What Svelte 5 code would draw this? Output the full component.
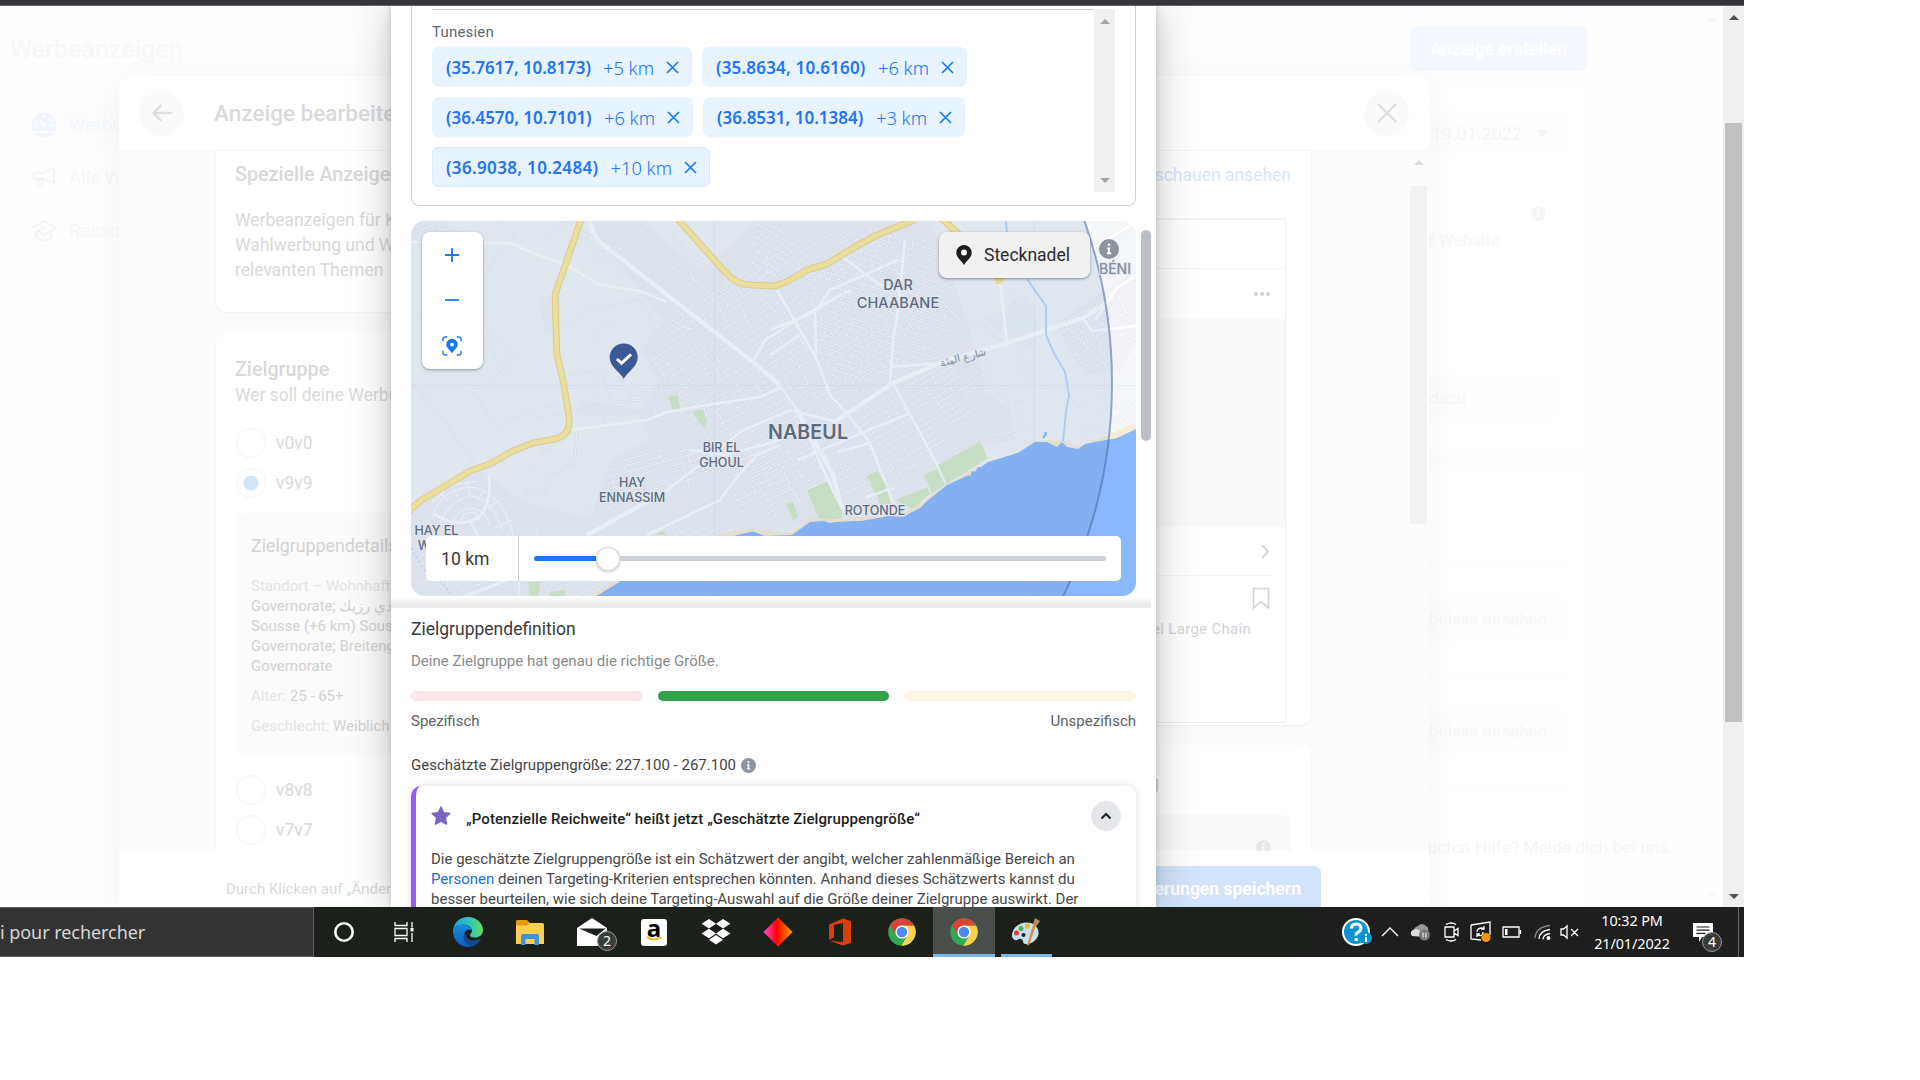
<script>
  const chips = [
    { at: '(35.7617, 10.8173)', km: '+5 km', w: 260, ls: -0.08 },
    { at: '(35.8634, 10.6160)', km: '+6 km', w: 265, ls: 0.18 },
    { at: '(36.4570, 10.7101)', km: '+6 km', w: 261, ls: -0.04 },
    { at: '(36.8531, 10.1384)', km: '+3 km', w: 262, ls: 0 },
    { at: '(36.9038, 10.2484)', km: '+10 km', w: 278, ls: 0.34, focus: true }
  ];

  // Built-up areas: outline, street direction in degrees, block size
  const areas = [
    { id: 'a1', pts: '648,362 672,318 715,288 775,250 850,225 900,235 935,300 880,378 830,418 780,388 735,400 672,402', deg: -32, u: 9, v: 6 },
    { id: 'a2', pts: '808,272 900,230 935,238 962,300 942,358 890,380 822,385', deg: 18, u: 11, v: 6 },
    { id: 'a3', pts: '668,402 780,392 838,425 893,503 855,517 800,510 735,470 690,440', deg: -27, u: 11, v: 7 },
    { id: 'a4', pts: '855,417 945,362 978,385 976,410 940,448 905,480 880,480', deg: -30, u: 10, v: 6 },
    { id: 'a5', pts: '604,470 640,450 680,443 722,465 690,486 640,505 602,490', deg: -15, u: 9, v: 6 },
    { id: 'a6', pts: '520,596 590,560 700,520 780,530 760,560 650,580 600,596', deg: -28, u: 12, v: 7 },
    { id: 'a7', pts: '1052,325 1085,305 1136,290 1136,350 1100,375 1070,365', deg: -24, u: 12, v: 9 },
    { id: 'a8', pts: '1076,430 1112,402 1136,398 1136,420 1085,443', deg: -22, u: 9, v: 6 },
    { id: 'a9', pts: '590,255 620,245 635,280 610,275', deg: 28, u: 9, v: 7 },
    { id: 'b1', pts: '420,535 520,530 524,596 415,596', deg: -22, u: 13, v: 8 },
    { id: 'b2', pts: '755,222 780,222 800,250 770,285 750,262', deg: 30, u: 8, v: 6 },
    { id: 'b3', pts: '720,480 780,450 800,500 770,520 735,510', deg: -24, u: 9, v: 6 },
    { id: 'b4', pts: '411,221 450,221 440,235 411,240', deg: -24, u: 12, v: 8 }
  ];

  let seed = 7;
  function rnd() {
    seed = (seed * 16807) % 2147483647;
    return seed / 2147483647;
  }

  function streets(area) {
    const p = area.pts.split(' ').map((s) => s.split(',').map(Number));
    const cx = p.reduce((t, q) => t + q[0], 0) / p.length;
    const cy = p.reduce((t, q) => t + q[1], 0) / p.length;
    const a = (area.deg * Math.PI) / 180;
    const at = (x, y) =>
      (cx + x * Math.cos(a) - y * Math.sin(a)).toFixed(1) + ' ' + (cy + x * Math.sin(a) + y * Math.cos(a)).toFixed(1);
    let d = '';
    for (let y = -170; y < 170; y += area.v) {
      for (let x = -170; x < 170; x += area.u) {
        if (rnd() > 0.16) d += `M${at(x, y)}L${at(x + area.u, y)}`;
        if (rnd() > 0.5) {
          const k = x + rnd() * 3;
          d += `M${at(k, y)}L${at(k, y + area.v)}`;
        }
      }
    }
    return d;
  }
  const grids = areas.map((area) => ({ ...area, d: streets(area) }));

  const highway =
    'M582 217 568 257 555 295 Q556 330 557 355 L563 380 569 417Q571 435 555 439L533 443 513 451 490 464 470 471 420 501 409 511M676 217 725 272Q737 285 750 285L775 286 790 280 807 270 827 264 853 248 877 235 915 220M940 217 962 237';
  const lanes =
    'M411 318L424 322 484 318 490 330 518 355 505 372 472 391 497 426 535 408 562 404M411 383L436 410 474 462M484 274L498 256 512 243 516 232 500 222M545 240L570 221M573 245L600 225M515 352L500 370 484 322M520 435L530 470 545 455 538 436M533 420L565 412 600 400M540 455L577 430 575 462 548 477 545 495 525 490M557 330L590 310 640 300 652 322 700 330M592 350L598 325 625 318M595 250L575 221M635 222L662 262 700 284M670 232L690 255 720 270 740 300M700 250L690 275 715 300 760 270M628 360L590 380 600 400 608 440M620 380L632 395 647 392M648 362L662 385 655 410 690 450 700 470M570 375L600 370 612 400M612 402L644 400M582 505L600 515 622 500M600 530L585 515M540 300L556 330M668 318L690 330 705 320M940 300L960 320 990 330 1003 345M940 330L975 370 1005 390 1026 430 990 435 940 455M985 358L1000 400 1012 405M1000 320L1015 310 1018 295 1003 290M1015 345L1030 372M1012 360L1040 390M985 280L975 260M1027 425L1045 415 1050 410M1071 395L1080 410 1110 385M1005 408L1026 398M1095 240L1115 270 1110 290M1105 250L1136 228M1060 320L1090 350 1110 370M1075 315L1085 345M493 480L522 520 535 575M420 510L440 545 450 596M525 490L545 560';
  const secondary =
    'M411 242 510 243 533 253 567 265 600 285 640 291 667 302M570 430 647 420 667 412 707 405 760 397 780 388M587 535 663 493 700 465 740 432 790 410 833 421M647 535 720 500 737 477 757 455 780 445M690 450 725 455 770 443 800 430M770 355 800 335M753 362 765 340 800 318 850 290M777 290 817 360 830 395 850 417 870 443 893 503M770 377 783 390 797 410 810 440 843 513M893 383 947 483M890 383 893 340 898 310 905 240M890 367 940 363M1000 282 1007 343M815 312 816 355M770 330 815 312 830 290 898 260M797 460 910 413M838 452 870 443M1083 318 1092 331 1136 326M1107 303 1117 288 1136 275M1090 250 1136 222M865 497 895 488M1117 288 1095 320M840 255 880 285 898 290M433 513Q455 530 478 518 492 505 489 475M470 520 500 580M465 596 520 575';
</script>

{#snippet info(r)}
  <svg class="info" width={r * 2} height={r * 2} viewBox="0 0 20 20">
    <circle cx="10" cy="10" r="10" fill="currentColor" />
    <path d="M8 8.400h3v5.200h1.400v1.600H7.800v-1.600h1.100V10H8zM8.700 4.400h2.400v2.300H8.700z" fill="#fff" />
  </svg>
{/snippet}

{#snippet chrome()}
  <svg width="28" height="28" viewBox="0 0 28 28">
    <circle cx="14" cy="14" r="13.800" fill="#2da94f" />
    <path d="M14 7.500h12A13.800 13.800 0 0 1 13.300 27.800L19.800 17z" fill="#fdd04b" />
    <path d="M2 7.200 8.200 17 14 7.600h12A13.800 13.800 0 0 0 2 7.200z" fill="#d84437" />
    <circle cx="14" cy="14" r="6.600" fill="#fff" />
    <circle cx="14" cy="14" r="5.200" fill="#4b8bf5" />
  </svg>
{/snippet}

<div class="screen">
  <div class="topline"></div>

  <div class="browser">
    <main class="page">
      <div class="left">
        <h1>Werbeanzeigen</h1>
        <nav>
          <div class="item on">
            <svg width="26" height="26" viewBox="0 0 26 26">
              <path d="M2 19A12.500 12.500 0 1 1 24 19zM3.500 21h19A12.500 12.500 0 0 1 3.500 21z" fill="#f1f6fe" />
              <path d="M9 9l5 5" stroke="#fff" stroke-width="2.500" /><g fill="#fff"><circle cx="13" cy="4.500" r="1.300" /><circle cx="19" cy="7" r="1.300" /><circle cx="21.500" cy="13" r="1.300" /><circle cx="4.500" cy="13" r="1.300" /></g>
            </svg>
            <span>Werbeanz.</span>
          </div>
          <div class="item">
            <svg width="26" height="24" viewBox="0 0 26 24" fill="none" stroke="#f4f4f4" stroke-width="1.800">
              <path d="M4 7h8l11-5v15l-11-4H4a2 2 0 0 1-2-2V9a2 2 0 0 1 2-2zM7 13v6a2 2 0 0 0 4 0v-6" />
            </svg>
            <span>Alle Werb.</span>
          </div>
          <div class="item">
            <svg width="26" height="24" viewBox="0 0 26 24" fill="none" stroke="#f4f4f4" stroke-width="1.800">
              <path d="M1 9 13 2l12 7-12 7-6-4 7-4M6 14v5l7 3 7-3v-6M6 12l-4 10" />
            </svg>
            <span>Ressourcen</span>
          </div>
        </nav>
      </div>

      <div class="right">
        <div class="create">Anzeige erstellen</div>
        <section class="rcard first">
          <div class="date">19.01.2022<i></i></div>
          <div class="rinfo">{@render info(7.5)}</div>
          <b>auf Website</b>
          <div class="pill dazu">dazu</div>
        </section>
        <section class="rcard second">
          <hr />
          <div class="pill">Ergebnisse ansehen</div>
          <hr />
          <div class="pill">Ergebnisse ansehen</div>
          <hr />
        </section>
        <div class="help">Du brauchst Hilfe? Melde dich bei uns.</div>
      </div>
      <div class="ghostbar"><i class="up"></i><i class="down"></i></div>
    </main>

    <div class="bar"><i class="up"></i><div class="thumb"></div><i class="down"></i></div>

    <div class="dialog edit">
      <header>
        <div class="round">
          <svg width="20" height="18" viewBox="0 0 20 18" fill="none" stroke="#dfe0e1" stroke-width="2.600" stroke-linecap="round" stroke-linejoin="round"><path d="M18.500 9H1.500M8.500 1.800 1.500 9l7 7.200" /></svg>
        </div>
        <h2>Anzeige bearbeiten</h2>
        <div class="round">
          <svg width="20" height="20" viewBox="0 0 20 20" stroke="#dcdee0" stroke-width="2.400" stroke-linecap="round"><path d="M1.500 1.500l17 17M18.500 1.500l-17 17" /></svg>
        </div>
      </header>

      <div class="content">
        <div class="col">
          <section class="ecard special">
            <h3>Spezielle Anzeigen</h3>
            <p>Werbeanzeigen für Kredite<br />Wahlwerbung und Werbung<br />relevanten Themen</p>
          </section>
          <section class="ecard target">
            <h3>Zielgruppe</h3>
            <p class="sub">Wer soll deine Werbung</p>
            <div class="radio"><i></i>v0v0</div>
            <div class="radio"><i class="sel"></i>v9v9</div>
            <div class="details">
              <h4>Zielgruppendetails</h4>
              <p><em>Standort – Wohnhaft in</em><br />Governorate; المهدي رزيك<br />Sousse (+6 km) Sousse<br />Governorate; Breitengrad<br />Governorate</p>
              <p><em>Alter:</em> 25 - 65+</p>
              <p><em>Geschlecht:</em> Weiblich</p>
            </div>
            <div class="radio"><i></i>v8v8</div>
            <div class="radio"><i></i>v7v7</div>
          </section>
        </div>

        <div class="col preview">
          <section class="ecard pcard">
            <div class="link">Vorschauen ansehen</div>
            <div class="frame">
              <div class="fhead"></div>
              <div class="dots"><i></i><i></i><i></i></div>
              <div class="media"></div>
              <div class="cta">
                <svg width="9" height="15" viewBox="0 0 9 15" fill="none" stroke="#cfcfcf" stroke-width="1.800"><path d="M1 1l6 6.500L1 14" /></svg>
              </div>
              <div class="save">
                <svg width="18" height="23" viewBox="0 0 18 23" fill="none" stroke="#d6d6d6" stroke-width="1.700"><path d="M1.500 1.500h15v19.500L9 14.500 1.500 21z" /></svg>
              </div>
              <div class="chain">Steel Large Chain</div>
            </div>
          </section>
          <section class="ecard pcard2">
            <div class="spend">Zahlung</div>
            <div class="ask">{@render info(7.5)}</div>
          </section>
        </div>
        <div class="ebar"><i class="up"></i><div class="thumb"></div></div>
      </div>

      <footer>
        <span>Durch Klicken auf „Änderungen</span>
        <div class="btn">Änderungen speichern</div>
      </footer>
    </div>

    <div class="dialog audience">
      <div class="scroller">
        <div class="places">
          <div class="list">
            <div class="country">Tunesien</div>
            <div class="chips">
              {#each chips as c}
                <div class="chip" class:focus={c.focus} style="width: {c.w}px">
                  <b style="letter-spacing: {c.ls}px">{c.at}</b><span>{c.km}</span>
                  <svg width="13" height="13" viewBox="0 0 13 13" stroke="#1b7bf0" stroke-width="1.700"><path d="M1 1l11 11M12 1 1 12" /></svg>
                </div>
              {/each}
            </div>
          </div>
          <div class="lbar"><i class="up"></i><i class="down"></i></div>
        </div>

        <div class="map">
          <svg class="ground" width="725" height="375" viewBox="411 221 725 375">
            <defs>
              {#each grids as g}
                <clipPath id={g.id}><polygon points={g.pts} /></clipPath>
              {/each}
            </defs>
            <rect x="411" y="221" width="725" height="375" fill="#f4f6f8" />
            <g fill="#f1f1f6">
              <path d="M590 221 640 221 700 270 760 221 930 221 960 300 985 380 978 410 1000 430 940 470 900 510 800 525 730 540 590 596 411 596 411 505 480 470 520 500 590 520 610 460 650 440 640 415 575 415 580 400 640 410 660 380 640 350 665 320 640 290 600 240z" />
              <path d="M1055 325 1090 300 1136 270 1136 340 1120 370 1085 375z" />
              <path d="M925 390 960 372 1010 410 1015 440 960 450z" />
              <path d="M540 300 560 290 560 335 545 335zM411 225 440 221 460 232 430 243 411 245z" />
            </g>
            <g fill="#eff4f6">
              <path d="M800 270 815 300 835 290 820 270zM845 330l18 18 12-18zM790 330l15 25 15-10zM985 320l40-25 20 40-20 15z" />
            </g>
            <g fill="none" stroke="#fff" stroke-width="1.100">
              {#each grids as g}
                <g clip-path="url(#{g.id})"><path class="halo" d={g.d} /><path d={g.d} /></g>
              {/each}
              <path class="halo" d={lanes} /><path d={lanes} />
            </g>
            <g fill="none" stroke="#fff" stroke-width="1.200">
              <path d="M433 517Q440 490 470 487 500 490 512 530L520 596M440 523Q452 498 472 496 494 500 502 530M450 527Q458 508 472 508 485 510 490 525M460 524l4-10 10-2 5 8M430 505l20-20 28-4M440 492l8 9M452 486l6 12M466 482l4 14M484 490l-6 10M500 500l-12 8M512 520l-18 8" />
            </g>
            <g fill="none" stroke="#fff" stroke-linejoin="round">
              <path d={secondary} stroke-width="2.600" />
              <path d="M590 221Q591 232 600 242L633 268 680 305 753 362 780 385M833 423 893 383 940 363 983 350 1007 343 1047 330 1083 318 1107 303M797 410 833 475 843 513M587 535 663 493" stroke-width="4.500" />
            </g>
            <g fill="#d8ecc8">
              <path d="M668 397 678 395 680 408 673 410zM693 412 703 409 707 422 705 429 698 421zM807 490 827 482 843 513 842 518 820 522zM867 476 878 471 887 488 875 493zM877 495 887 491 892 505 880 504zM938 465 980 442 988 458 947 484zM924 475 937 469 945 485 932 494zM896 500 927 487 930 494 912 509zM786 504 793 502 798 517 793 520zM528 582h12l-2 14h-8zM550 592l15-2v6h-17zM655 535l8-4 4 4z" />
            </g>
            <path d="M585 598 618 580 660 558 720 534 750 529 792 533 810 518 837 520 857 517 903 514 925 500 970 471 1018 452 1035 441 1062 440 1078 447 1110 434 1136 422 1136 596z" fill="#f7edd6" />
            <path d="M595 597 621 581 670 560 700 548 737 535 753 531.500 765 536 792 535 810 522 824 521 829 523 837 522 855 521 861 521 889 516 903 517 920 508 926 502 947 485 969 475 970 477 972 471 975 472 978 467 981 467 988 462 1018 453 1035 442 1047 442 1057 447 1062 442 1067 447 1078 449 1085 444 1117 438 1136 429 1136 597z" fill="#8ab8fc" />
            <path d="M1006 221 1007 235M1027 279 1046 306 1046 335 1054 353 1065 372 1069 395 1066 412 1063 441" fill="none" stroke="#bdd8fb" stroke-width="1.800" />
            <path d="M1043 438l3-4-1-2" fill="none" stroke="#8ab8fc" stroke-width="2.200" />
            <path d="M411 548 424 570 440 580 452 596" fill="none" stroke="#9fc8ff" stroke-dasharray="2 3" />
            <g fill="none" stroke-linejoin="round">
              <path d={highway} stroke="#f5d070" stroke-width="6.600" />
              <path d={highway} stroke="#fdef9e" stroke-width="5" />
            </g>
            <path d="M993 278h12l-4 6h-4z" fill="#f9e78f" />
            <circle cx="622" cy="383" r="490" fill="#527bab" fill-opacity=".13" stroke="#47669f" stroke-opacity=".55" stroke-width="2" />
            <path d="M714.500 221v375M1034.500 221v375M411 385.500h725" stroke="#8a9bb5" stroke-opacity=".09" />
            <g class="labels" text-anchor="middle">
              <text x="898" y="290" font-size="14.500">DAR</text>
              <text x="898" y="308" font-size="14.500" letter-spacing=".1">CHAABANE</text>
              <text x="808" y="439" font-size="19.500" class="big" letter-spacing=".2">NABEUL</text>
              <text x="721.500" y="452" font-size="12.500">BIR EL</text>
              <text x="721.500" y="467" font-size="12.500">GHOUL</text>
              <text x="632" y="487" font-size="12.500">HAY</text>
              <text x="632" y="502" font-size="12.500">ENNASSIM</text>
              <text x="436.500" y="535" font-size="12.500">HAY EL</text>
              <text x="424" y="550" font-size="12.500">W</text>
              <text x="875" y="515" font-size="12.500">ROTONDE</text>
              <text x="1115" y="274" font-size="14" class="grey">BÉNI</text>
              <text x="963" y="361" font-size="10.500" class="grey" transform="rotate(-14 963 357)">شارع البيئة</text>
            </g>
            <path d="M623.700 379C620 371.500 609.700 367 609.700 357.500a14 14 0 0 1 28 0c0 9.500-10.300 14-14 21.500z" fill="#3b5998" />
            <path d="M617 359l4.500 4.300 9.500-9" fill="none" stroke="#fff" stroke-width="3" />
          </svg>

          <div class="zoom">
            <svg width="14" height="14" viewBox="0 0 14 14" stroke="#1877f2" stroke-width="1.800"><path d="M7 0v14M0 7h14" /></svg>
            <svg width="14" height="14" viewBox="0 0 14 14" stroke="#1877f2" stroke-width="1.800"><path d="M0 8h14" /></svg>
            <svg width="20" height="20" viewBox="0 0 21 21">
              <path d="M1 5.500V3.500A2.500 2.500 0 0 1 3.500 1h2M15.500 1h2A2.500 2.500 0 0 1 20 3.500v2M20 15.500v2a2.500 2.500 0 0 1-2.500 2.500h-2M5.500 20h-2A2.500 2.500 0 0 1 1 17.500v-2" fill="none" stroke="#1877f2" stroke-width="1.500" />
              <path fill-rule="evenodd" d="M10.500 18C8 14.500 4.500 12.500 4.500 9a6 6 0 0 1 12 0c0 3.500-3.500 5.500-6 9zM10.500 11a2 2 0 1 0 0-4 2 2 0 0 0 0 4z" fill="#1877f2" />
            </svg>
          </div>
          <div class="droppin">
            <svg width="16" height="20" viewBox="0 0 16 20"><path fill-rule="evenodd" d="M8 20C6 16 .3 13 .3 7.700a7.700 7.700 0 0 1 15.400 0C15.700 13 10 16 8 20zM8 10.500a3 3 0 1 0 0-6 3 3 0 0 0 0 6z" fill="#1c1e21" /></svg>
            Stecknadel
          </div>
          <div class="mapinfo">{@render info(10)}</div>
          <div class="radius">
            <div class="km">10 km</div>
            <div class="track"><div class="fill"></div><div class="knob"></div><div class="rest"></div></div>
          </div>
        </div>
      </div>

      <div class="vthumb"></div>
      <div class="shade"></div>

      <div class="def">
        <h5>Zielgruppendefinition</h5>
        <p class="ok">Deine Zielgruppe hat genau die richtige Größe.</p>
        <div class="gauge"><i></i><i></i><i></i></div>
        <div class="ends"><span>Spezifisch</span><span>Unspezifisch</span></div>
        <div class="size">Geschätzte Zielgruppengröße: 227.100 - 267.100 <span>{@render info(7.5)}</span></div>
        <article>
          <div class="ahead">
            <svg width="20" height="20" viewBox="0 0 20 20"><path d="M10 1l2.600 5.800 6.200.7-4.600 4.200 1.300 6.400L10 15.200l-5.500 2.900 1.300-6.400L1.200 7.500l6.200-.7z" fill="#7b64bf" stroke="#7b64bf" stroke-width="1.500" stroke-linejoin="round" /></svg>
            <b>„Potenzielle Reichweite“ heißt jetzt „Geschätzte Zielgruppengröße“</b>
            <div class="fold"><svg width="12" height="8" viewBox="0 0 12 8" fill="none" stroke="#1c1e21" stroke-width="2"><path d="M1.500 6.500 6 2l4.500 4.500" /></svg></div>
          </div>
          <p>Die geschätzte Zielgruppengröße ist ein Schätzwert der angibt, welcher zahlenmäßige Bereich an<br /><a href="#personen">Personen</a> deinen Targeting-Kriterien entsprechen könnten. Anhand dieses Schätzwerts kannst du<br />besser beurteilen, wie sich deine Targeting-Auswahl auf die Größe deiner Zielgruppe auswirkt. Der</p>
        </article>
      </div>
    </div>
  </div>

  <div class="taskbar">
    <div class="search">i pour rechercher</div>
    <div class="apps">
      <div class="app"><svg width="22" height="22" viewBox="0 0 22 22"><circle cx="11" cy="11" r="8.700" fill="none" stroke="#fff" stroke-width="2.600" /></svg></div>
      <div class="app">
        <svg width="22" height="20" viewBox="0 0 22 20" fill="none" stroke="#fff" stroke-width="1.300"><path d="M2 0v3.500h12V0M2 20v-3.500h12V20M2 6.500h12v7H2zM19 0v5.500M19 11v9" /><path d="M17.500 6h3v3.500h-3z" fill="#fff" stroke="none" /></svg>
      </div>
      <div class="app edge">
        <svg width="32" height="32" viewBox="0 0 32 32">
          <defs>
            <linearGradient id="eg" x1="0" x2="1"><stop offset="0" stop-color="#1fa8e0" /><stop offset=".6" stop-color="#35c6b8" /><stop offset="1" stop-color="#66dc5a" /></linearGradient>
            <linearGradient id="eb" x1="0" x2="0" y2="1"><stop offset="0" stop-color="#1b8fdc" /><stop offset="1" stop-color="#0d5ab5" /></linearGradient>
          </defs>
          <path d="M1 15C2 6 8 1 16 1s15 6 15 13c0 5-4 7.500-8 7.500s-5-1.500-5-2.500 2-1.500 2-4.500-4-6-9-6S1 13 1 15z" fill="url(#eg)" />
          <path d="M1 14c1-4 5-6 10-5.500 5 .5 8.500 3 9 6-3-2-6-1-7 2-1 6 5 12 16 6-3 6-8 8.500-13 8.500-9 0-15.500-8-15-17z" fill="url(#eb)" />
          <path d="M13 16c-3 4-2 11 6 14.500 4-.5 8-3.500 10-8-8 5-16 1-16-6.500z" fill="#114a8b" />
        </svg>
      </div>
      <div class="app">
        <svg width="28" height="25" viewBox="0 0 28 25">
          <path d="M0 1.500A1.500 1.500 0 0 1 1.500 0H11l3 3v8H0z" fill="#e39b0b" /><path d="M0 5.500h11L14 3h12.500A1.500 1.500 0 0 1 28 4.500V24H0z" fill="#fbcf55" />
          <path d="M5 25V16a2 2 0 0 1 2-2h14a2 2 0 0 1 2 2v9h-4.500v-6h-9v6z" fill="#3d95e0" />
        </svg>
      </div>
      <div class="app">
        <svg width="32" height="30" viewBox="0 0 32 30"><path d="M1 11 16 1l15 10v18H1z" fill="#fff" /><path d="M3 11.500h26.500l-9 7.500z" fill="#1d211d" /></svg>
        <span class="badge">2</span>
      </div>
      <div class="app"><div class="amazon">a<svg width="18" height="6" viewBox="0 0 18 6"><path d="M2 1q7 5 14 0" fill="none" stroke="#fbb929" stroke-width="2.200" /></svg></div></div>
      <div class="app"><svg width="30" height="26" viewBox="0 0 30 26" fill="#fff"><path d="M8 0l7 4.700-7 4.800-7.500-4.800zM22 0l7.500 4.700L22 9.500l-7-4.800zM8 9.700l7 4.800-7 4.700-7.500-4.700zM22 9.700l7.500 4.800-7.500 4.700-7-4.700zM15 16l7 4.800-7 4.700-7-4.700z" /></svg></div>
      <div class="app">
        <svg width="30" height="30" viewBox="0 0 30 30"><defs><linearGradient id="dg" x1="0" x2="1"><stop offset="0" stop-color="#ff4fd8" /><stop offset=".45" stop-color="#f00" /><stop offset="1" stop-color="#ffa800" /></linearGradient></defs><path d="M15 .5 29.500 15 15 29.500.5 15z" fill="url(#dg)" /></svg>
      </div>
      <div class="app"><svg width="24" height="28" viewBox="0 0 24 28"><path d="M1 6.500 15 .5l8 2.500v22l-8 2.500-14-5 14 1.500V5L6 7v12.500l-5 2.500z" fill="#dc3e0a" /></svg></div>
      <div class="app">{@render chrome()}</div>
      <div class="app active">{@render chrome()}</div>
      <div class="app open">
        <svg width="30" height="28" viewBox="0 0 30 28">
          <path d="M2 13C5 6 13 3 20 5c6 2 9 8 7 13s-8 9-13 8c-3-1-1-4-4-5s-3 2-6 1-4-5-2-9z" fill="#c4e2f3" />
          <circle cx="5.500" cy="15" r="2.500" fill="#e03c31" /><circle cx="10" cy="10.500" r="2.500" fill="#4caf50" /><circle cx="16.500" cy="8" r="2.700" fill="#f5b82e" /><circle cx="12.500" cy="17" r="2" fill="#1d211d" />
          <path d="M16 27 22.500 6l2.500 1-7 20.500z" fill="#e8862e" /><path d="M22 6 24 0l5 3-3.500 5z" fill="#b98a5e" />
        </svg>
      </div>
    </div>
    <div class="tray">
      <svg class="q" width="32" height="28" viewBox="0 0 32 28"><circle cx="14" cy="14" r="13" fill="#0a93d2" stroke="#fff" stroke-width="2" /><path d="M9.500 10.500q0-4.500 4.700-4.500t4.700 4q0 2.500-2.500 4t-2.200 3.500M14.200 20v3" fill="none" stroke="#fff" stroke-width="3.200" /><circle cx="24" cy="20" r="6" fill="#0a93d2" /><path d="M24 16v1.800M24 19v5" stroke="#fff" stroke-width="2" /></svg>
      <svg class="more" width="18" height="10" viewBox="0 0 18 10" fill="none" stroke="#fff" stroke-width="1.400"><path d="M1 9l8-8 8 8" /></svg>
      <svg class="cloud" width="21" height="18" viewBox="0 0 21 18"><path d="M3 9q1-5 5-6 4-4 8 0 3 1 2 6z" fill="#999" /><path d="M2 13q-3-4 1-6 5-3 8 2l4 5z" fill="#ddd" /><circle cx="14.500" cy="12" r="5.500" fill="#777" /><path d="M13 9.500v5M16 9.500v5" stroke="#fff" /></svg>
      <svg class="cam" width="16" height="20" viewBox="0 0 16 20" fill="none" stroke="#fff" stroke-width="1.300"><path d="M1 5h9v10H1zM10 9l4-2.500v7L10 11M2 2.500q5-3 10 0M2 17.500q5 3 10 0" /></svg>
      <svg class="sync" width="22" height="22" viewBox="0 0 22 22" fill="none" stroke="#fff" stroke-width="1.300"><path d="M1 4 20 1v13M1 4v14l10 1M7 11q0-4 5-4l2 1M14 5v3h-3M13 11q0 4-4 3.500l-2-.5M7 16v-3h3" /><circle cx="16" cy="16.500" r="4.500" fill="#ff9500" stroke="none" /></svg>
      <svg class="bat" width="20" height="12" viewBox="0 0 20 12" fill="none" stroke="#fff" stroke-width="1.300"><path d="M1 1h16v10H1zM18.500 4v4" /><path d="M3 3h2.500v6H3z" fill="#fff" stroke="none" /></svg>
      <svg class="wifi" width="17" height="17" viewBox="0 0 17 17" fill="none" stroke-width="1.300"><path d="M1 14Q2 3 16 1.500" stroke="#888" /><path d="M5 15Q5 7 16 5.500M9 15.500q0-5 7-6" stroke="#fff" /><circle cx="14.500" cy="14" r="2" fill="#fff" /></svg>
      <svg class="vol" width="19" height="16" viewBox="0 0 19 16" fill="none" stroke="#fff" stroke-width="1.300"><path d="M1 5h2.500L7 2v12l-3.500-3H1zM11 5l7 7M18 5l-7 7" /></svg>
      <div class="clock"><span>10:32 PM</span><span>21/01/2022</span></div>
      <div class="note"><svg width="20" height="19" viewBox="0 0 20 19"><path d="M0 0h20v14H9l-3 5v-5H0z" fill="#fff" /><path d="M3.500 4h13M3.500 7.200h13M3.500 10.400h9" stroke="#1f1f1f" stroke-width="1.200" /></svg><span class="badge">4</span></div>
      <div class="peek"></div>
    </div>
  </div>
</div>

<style>
  :global(body) { background: #fff; font-family: Roboto, 'Noto Sans', sans-serif; }
  .screen { width: 1744px; height: 957px; display: grid; grid-template-rows: 6px 901px 50px; overflow: hidden; background: #fff; }
  .screen :global(*) { box-sizing: border-box; }
  svg { display: block; flex: none; }
  h1, h2, h3, h4, h5, p { margin: 0; font-weight: 400; }
  .topline { background: #35363a; border-bottom: 1px solid #6b6169; }
  .browser { position: relative; display: flex; overflow: hidden; }
  i.up, i.down { display: block; width: 0; height: 0; border: 5px solid transparent; }
  i.up { border-bottom-color: currentColor; border-top: 0; }
  i.down { border-top-color: currentColor; border-bottom: 0; }

  .page { width: 1723px; display: flex; background: #fefefe; }
  .left { width: 391px; padding: 29px 0 0 10px; }
  h1 { font-size: 25px; font-weight: 500; line-height: 30px; color: #f8f8f8; letter-spacing: .05px; }
  nav { margin-top: 22px; padding: 13px 0 0 8px; display: flex; flex-direction: column; gap: 3px; }
  .item { height: 50px; padding-left: 13px; display: flex; align-items: center; gap: 12px; font-size: 18.750px; color: #f7f7f7; }
  .item.on { color: #f4f8fe; font-weight: 500; background: #fdfdfd; border-radius: 8px; }
  .right { margin-left: 765px; width: 531px; display: flex; flex-direction: column; align-items: flex-end; padding: 20px 0 0; }
  .create { width: 177px; height: 45px; margin-right: 100px; border-radius: 7px; background: #f5f9ff; color: #fff; font-weight: 700; font-size: 17.500px; display: flex; align-items: center; justify-content: center; }
  .rcard { width: 431px; margin-right: 100px; background: #fff; border-radius: 8px; color: #f8f8f8; padding: 20px; display: flex; flex-direction: column; align-items: flex-end; }
  .first { margin-top: 19px; height: 361px; }
  .date { height: 45px; padding-right: 19px; border-radius: 7px; background: #fefefe; font-size: 18px; display: flex; align-items: center; gap: 14px; color: #f6f6f6; padding-top: 2px; }
  .date i { border: 6px solid transparent; border-top: 7px solid #f4f4f4; border-bottom: 0; }
  .rinfo { margin: 51px 21px 0 0; color: #f6f6f6; }
  .rcard b { margin: 8px 67px 0 0; font-size: 17px; font-weight: 500; line-height: 22px; color: #f8f8f8; }
  .pill { height: 45px; width: 200px; padding-right: 20px; border-radius: 7px; background: #fefefe; display: flex; align-items: center; justify-content: flex-end; font-size: 17px; color: #f7f7f7; }
  .pill.dazu { margin: 124px 10px 0 0; padding-right: 91px; }
  .second { margin-top: 19px; height: 437px; padding-top: 91px; }
  hr { width: 100%; border: 0; border-top: 1px solid #fbfbfb; margin: 0 0 33px; }
  .pill + hr { margin-top: 32px; }
  .second .pill { margin-top: 1px; }
  .help { margin: -90px 0 0; width: 330px; height: 60px; border-radius: 10px; font-size: 17.200px; display: flex; align-items: center; justify-content: flex-end; padding-right: 14px; color: #f6f6f6; white-space: nowrap; letter-spacing: .1px; }
  .ghostbar { margin-left: 14px; width: 21px; display: flex; flex-direction: column; align-items: center; justify-content: space-between; padding: 10px 0 9px; color: #f7f7f7; }
  .bar { width: 21px; background: #f0f0f0; display: flex; flex-direction: column; align-items: center; padding: 9px 0 8px; color: #505050; }
  .bar .thumb { width: 17px; height: 599px; margin-top: 103px; background: #c1c1c1; }
  .bar .down { margin-top: auto; }

  .dialog { position: absolute; overflow: hidden; background: #fff; }
  .edit { left: 119px; top: 70px; width: 1310px; height: 840px; border-radius: 12px 12px 0 0; display: flex; flex-direction: column; box-shadow: 0 4px 34px rgba(0, 0, 0, .045); }
  .edit header { height: 75px; padding: 0 20px; display: flex; align-items: center; border-bottom: 1px solid #f6f6f6; }
  .round { width: 45px; height: 45px; border-radius: 50%; background: #fafafa; display: flex; align-items: center; justify-content: center; }
  h2 { flex: 1; margin-left: 30px; font-size: 22.500px; font-weight: 500; color: #dadada; }
  .content { height: 700px; display: flex; background: #fcfcfc; padding-left: 97px; overflow: hidden; }
  .col { width: 540px; flex: none; }
  .ecard { background: #fff; box-shadow: 0 1px 3px rgba(0, 0, 0, .05); }
  .special { height: 161px; padding: 9px 20px; border-radius: 0 0 10px 10px; }
  h3 { margin-left: -1px; font-size: 19.700px; font-weight: 500; line-height: 30px; color: #d9d9d9; }
  .special p { margin: 18px 0 0 -1px; font-size: 17.500px; line-height: 25px; color: #d9d9d9; }
  .target { margin-top: 20px; height: 700px; padding: 23px 20px 21px; border-radius: 10px 10px 0 0; }
  .sub { font-size: 17.500px; line-height: 24px; color: #dadada; margin: -2px 0 0 -1px; }
  .radio { height: 30px; display: flex; align-items: center; gap: 10px; font-size: 17.500px; color: #d9d9d9; margin-bottom: 10px; }
  .sub + .radio { margin-top: 21px; }
  .radio i { width: 30px; height: 30px; border: 1px solid #f4f4f4; border-radius: 50%; }
  .radio i.sel { background: radial-gradient(circle, #d2e4fc 7px, #fff 8px); }
  .details { height: 242px; margin: 15px 0 20px; padding: 20px 15px; border-radius: 8px; background: #fbfbfb; }
  h4 { font-size: 17.800px; line-height: 26px; color: #d2d2d2; }
  .details p { font-size: 15px; line-height: 20px; color: #d2d2d2; margin-top: 10px; }
  .details h4 + p { margin-top: 17px; }
  .details em { font-style: normal; color: #e3e3e3; }
  .preview { margin-left: 14px; width: 541px; }
  .pcard { height: 574px; border-radius: 0 0 10px 10px; padding: 12px 25px 0 20px; display: flex; flex-direction: column; }
  .link { height: 55px; margin-right: -5px; text-align: right; font-size: 17.500px; line-height: 25px; color: #d9e6fc; }
  .frame { height: 505px; border: 1px solid #efefef; border-top: 2px solid #f4f4f4; display: flex; flex-direction: column; }
  .fhead { height: 49px; border-bottom: 1px solid #f3f3f3; }
  .dots { height: 50px; display: flex; gap: 2px; align-items: center; justify-content: flex-end; padding-right: 15px; }
  .dots i { width: 4px; height: 4px; border-radius: 50%; background: #d0d0d0; }
  .media { height: 208px; background: #fafafa; }
  .cta { height: 49px; margin-right: 13px; padding-right: 2px; border-bottom: 1px solid #f5f5f5; display: flex; align-items: center; justify-content: flex-end; }
  .save { height: 44px; padding: 11px 15px 0 0; display: flex; justify-content: flex-end; }
  .chain { padding-right: 34px; text-align: right; font-size: 15px; line-height: 18px; color: #d3d3d3; letter-spacing: .3px; }
  .pcard2 { margin-top: 20px; height: 300px; border-radius: 10px; padding: 27px 20px; }
  .spend { width: 369px; height: 43px; text-align: right; font-size: 17.500px; line-height: 22px; color: #d2d2d2; }
  .ask { height: 80px; border-radius: 8px; background: #fafafa; display: flex; justify-content: flex-end; padding: 25px 20px; color: #e8e8e8; }
  .ebar { margin-left: auto; width: 21px; display: flex; flex-direction: column; align-items: center; padding-top: 9px; color: #dcdcdc; }
  .ebar .thumb { margin-top: 21px; width: 17px; height: 338px; background: #f2f2f2; }
  footer { flex: 1; display: flex; padding: 15px 108px 0 107px; justify-content: space-between; font-size: 15px; color: #d9d9d9; }
  footer span { line-height: 46px; }
  .btn { width: 230px; height: 50px; border-radius: 7px; background: #d2e4fc; color: #fff; font-weight: 700; font-size: 17.500px; line-height: 46px; text-align: right; padding-right: 20px; }

  .audience { left: 391px; top: 0; width: 765px; height: 901px; box-shadow: 0 0 38px rgba(0, 0, 0, .25), 0 0 6px rgba(0, 0, 0, .15); }
  .scroller { padding: 0 20px 0 20px; }
  .places { height: 200px; border: 1px solid #ccd0d5; border-top: 0; border-radius: 0 0 8px 8px; padding: 3px 20px 13px; display: flex; }
  .list { flex: 1; border-top: 1px solid #ccd0d5; }
  .country { margin: 12px 0 5px; font-size: 15px; line-height: 20px; color: #606770; letter-spacing: .2px; }
  .chips { display: flex; flex-wrap: wrap; gap: 10px; }
  .chip { height: 40px; padding: 0 13px 0 14px; border-radius: 7px; background: #e7f3ff; color: #2374f2; font: 17px 'Noto Sans', sans-serif; display: flex; align-items: center; gap: 12px; white-space: nowrap; }
  .chip b { font-weight: 600; }
  .chip span { margin-left: auto; font-weight: 300; font-size: 18.300px; }
  .chip.focus { box-shadow: inset 0 0 0 1px #d8e9fd; }
  .lbar { width: 21px; background: #f0f0f0; display: flex; flex-direction: column; justify-content: space-between; align-items: center; padding: 10px 0 9px; color: #a3a3a3; }
  .map { position: relative; margin-top: 15px; width: 725px; height: 375px; border-radius: 14px; overflow: hidden; }
  .halo { stroke: #e3e6ee; stroke-width: 2.200; }
  .labels { font-family: Inter, sans-serif; fill: #5d6a7e; stroke: #e3e8f0; stroke-width: 2px; paint-order: stroke; font-weight: 450; }
  .labels .big { font-weight: 600; }
  .labels .grey { fill: #858d9b; }
  .zoom { position: absolute; left: 11px; top: 11px; width: 61px; height: 137px; background: #fff; border-radius: 8px; box-shadow: 0 1px 3px rgba(0, 0, 0, .35); display: flex; flex-direction: column; align-items: center; padding: 16px 1px 13px 0; justify-content: space-between; }
  .droppin { position: absolute; left: 528px; top: 11px; width: 151px; height: 46px; border-radius: 8px; background: #f1f1f1; box-shadow: 0 1px 3px rgba(0, 0, 0, .4); display: flex; align-items: center; gap: 12px; padding-left: 17px; font-size: 17.500px; color: #2a2c30; }
  .mapinfo { position: absolute; left: 688px; top: 18px; color: #8d949e; }
  .radius { position: absolute; left: 15px; top: 315px; width: 695px; height: 45px; border-radius: 5px; background: #fff; display: flex; }
  .km { width: 93px; border-right: 1px solid #ccd0d5; padding-left: 15px; line-height: 46px; font-size: 17.600px; color: #3a3a3a; }
  .track { flex: 1; display: flex; align-items: center; padding: 0 15px; }
  .fill { width: 62px; height: 5px; border-radius: 3px 0 0 3px; background: #1877f2; }
  .knob { width: 24px; height: 24px; border-radius: 50%; background: #fff; border: 1px solid #d3d6da; box-shadow: 0 1px 3px rgba(0, 0, 0, .25); }
  .rest { flex: 1; height: 5px; border-radius: 0 3px 3px 0; background: #ccd0d5; }
  .vthumb { position: absolute; left: 750px; top: 224px; width: 10px; height: 211px; border-radius: 5px; background: #bcc0c4; }
  .shade { width: 760px; height: 12px; background: linear-gradient(#fff 10%, #ececec 65%, #ececec); }
  .def { padding: 8px 20px 0; color: #444; }
  h5 { font-size: 17.500px; line-height: 26px; color: #3a3a3a; }
  .ok { margin-top: 9px; font-size: 15px; line-height: 20px; color: #8a8a8a; }
  .gauge { margin-top: 20px; display: grid; grid-template-columns: 1fr 1fr 1fr; gap: 15px; }
  .gauge i { height: 10px; border-radius: 5px; background: #fbe8eb; }
  .gauge i:nth-child(2) { background: #31a24c; }
  .gauge i:nth-child(3) { background: #fef5e4; }
  .ends { margin-top: 10px; display: flex; justify-content: space-between; font-size: 15px; line-height: 20px; color: #606060; }
  .size { margin-top: 24px; font-size: 15px; line-height: 20px; display: flex; align-items: center; gap: 5px; color: #444; }
  .size span { color: #8d949e; }
  article { margin-top: 11px; height: 200px; border-radius: 10px; border-left: 5px solid #9360f7; box-shadow: 0 0 8px rgba(0, 0, 0, .12); padding: 15px 15px 0; }
  .ahead { height: 30px; display: flex; align-items: center; }
  .ahead b { margin: 5px 0 0 15px; font-size: 15px; font-weight: 550; color: #1c1e21; white-space: nowrap; letter-spacing: .09px; }
  .fold { margin-left: auto; width: 30px; height: 30px; border-radius: 50%; background: #e4e6eb; display: flex; align-items: center; justify-content: center; }
  article p { margin-top: 18px; font-size: 15px; line-height: 20px; white-space: nowrap; color: #484848; }
  a { color: #216fdb; text-decoration: none; }

  .taskbar { display: flex; background: linear-gradient(90deg, #1c201b 0 1290px, #1e1e1e 1330px); color: #fff; }
  .search { width: 314px; background: #333; border: 1px solid #5e5e5e; border-left: 0; font: 18px/48px 'Noto Sans', sans-serif; color: #d8d8d8; letter-spacing: -.05px; }
  .apps { display: flex; }
  .app { position: relative; width: 62px; height: 50px; display: flex; align-items: center; justify-content: center; }
  .app:first-child { width: 60px; }
  .app:nth-child(2) { width: 60px; }
  .app.edge { margin-left: 3px; }
  .app.active { background: #4b4f4b; border-bottom: 3px solid #76b9ed; padding-top: 3px; }
  .app.open::after { content: ''; position: absolute; left: 6px; bottom: 0; width: 51px; height: 3px; background: #76b9ed; }
  .badge { position: absolute; left: 36px; top: 24px; width: 20px; height: 20px; border: 1px solid #999; border-radius: 50%; background: #3a3c3a; font: 14px/18px 'Noto Sans', sans-serif; text-align: center; }
  .amazon { width: 26px; height: 27px; border-radius: 3px; background: #fff; color: #000; font: 700 24px/17px 'Open Sans', sans-serif; display: flex; flex-direction: column; align-items: center; }
  .tray { margin-left: auto; display: flex; align-items: center; }
  .q { margin-right: 7px; }
  .more { margin-right: 11px; }
  .cloud { margin-right: 13px; }
  .cam { margin-right: 10px; }
  .sync { margin-right: 10px; }
  .bat { margin-right: 12px; }
  .wifi { margin-right: 9px; }
  .vol { margin-right: 13px; }
  .clock { width: 80px; display: flex; flex-direction: column; align-items: center; font: 14.400px/23px 'Noto Sans', sans-serif; white-space: nowrap; letter-spacing: -.1px; }
  .note { position: relative; width: 45px; margin-left: 21px; }
  .note .badge { left: 9px; top: 9px; }
  .peek { width: 6px; height: 50px; border-left: 1px solid #666; }
</style>
